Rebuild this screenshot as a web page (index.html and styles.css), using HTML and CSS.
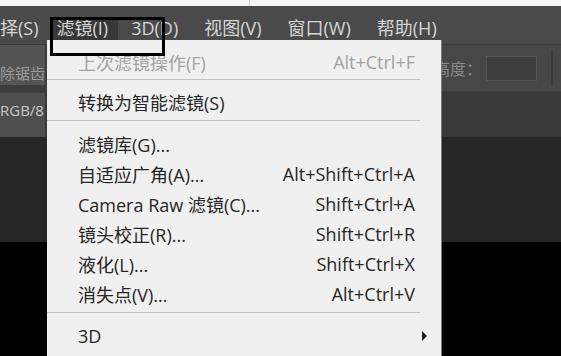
FILE: index.html
```html
<!DOCTYPE html>
<html>
    <head>
        <link rel="stylesheet" href="styles.css">
    </head>
    <body>
        <div class="app">
            <div class="topStrip"><div class="topLeft"></div></div>
            <div class="menuBar">
                <span class="mbItem first">择(S)</span>
                <span class="mbItem active">滤镜(I)</span>
                <span class="mbItem">3D(D)</span>
                <span class="mbItem">视图(V)</span>
                <span class="mbItem">窗口(W)</span>
                <span class="mbItem">帮助(H)</span>
            </div>
            <div class="optionsBar">
                <div class="optLeft">除锯齿</div>
                <div class="optRight">
                    <span class="optLabel">高度：</span>
                    <span class="optInput"></span>
                    <span class="optSep"></span>
                </div>
            </div>
            <div class="tabBar">
                <div class="tab">RGB/8</div>
            </div>
            <div class="frame"></div>
            <div class="canvas"></div>

            <!-- 滤镜 下拉菜单 -->
            <div class="dropMenu">
                <div class="mItem disabled"><span>上次滤镜操作(F)</span><span class="key">Alt+Ctrl+F</span></div>
                <div class="mSep tight"></div>
                <div class="mItem"><span>转换为智能滤镜(S)</span></div>
                <div class="mSep"></div>
                <div class="mItem"><span>滤镜库(G)...</span></div>
                <div class="mItem"><span>自适应广角(A)...</span><span class="key">Alt+Shift+Ctrl+A</span></div>
                <div class="mItem"><span>Camera Raw 滤镜(C)...</span><span class="key">Shift+Ctrl+A</span></div>
                <div class="mItem"><span>镜头校正(R)...</span><span class="key">Shift+Ctrl+R</span></div>
                <div class="mItem"><span>液化(L)...</span><span class="key">Shift+Ctrl+X</span></div>
                <div class="mItem"><span>消失点(V)...</span><span class="key">Alt+Ctrl+V</span></div>
                <div class="mSep"></div>
                <div class="mItem"><span>3D</span><span class="arrow"></span></div>
            </div>

            <!-- 标注框 -->
            <div class="mark"></div>
        </div>
    </body>
</html>
```

FILE: styles.css
```css
*{
    padding: 0;
    margin: 0;
    box-sizing: border-box;
}
body{
    background: #000;
    font-family: "Open Sans", "Noto Sans CJK SC", sans-serif;
}
.app{
    width: 561px;
    height: 356px;
    position: relative;
    overflow: hidden;
    display: flex;
    flex-direction: column;
}
.topStrip{
    height: 6px;
    background: #f4f4f4;
    display: flex;
}
.topLeft{
    width: 250px;
    border-right: 1px solid #cfcfcf;
}
.menuBar{
    height: 38px;
    background: #4a4a4a;
    display: flex;
    align-items: flex-end;
    color: #d6d6d6;
    font-size: 18px;
    white-space: nowrap;
}
.mbItem{
    height: 27px;
    line-height: 22px;
    padding: 0 13px;
}
.mbItem.first{
    padding: 0;
    margin-right: 11px;
}
.mbItem.active{
    background: #383838;
    padding: 0 10px 0 7px;
}
.optionsBar{
    height: 49px;
    background: #3c3c3c;
    display: flex;
    align-items: stretch;
    padding-top: 1px;
}
.optLeft{
    width: 45px;
    margin-right: 2px;
    margin-bottom: 8px;
    padding-top: 16px;
    background: #545454;
    color: #9a9a9a;
    font-size: 15px;
    line-height: 24px;
    white-space: nowrap;
}
.optRight{
    flex: 1;
    background: #474747;
    display: flex;
    align-items: center;
    justify-content: flex-end;
    padding-right: 8px;
    margin-bottom: 2px;
}
.optLabel{
    color: #8a8a8a;
    font-size: 16px;
    margin-right: 4px;
    white-space: nowrap;
}
.optInput{
    width: 51px;
    height: 25px;
    background: #3e3e3e;
    border: 1px solid #565656;
    margin-right: 14px;
}
.optSep{
    width: 2px;
    height: 36px;
    background: #3a3a3a;
}
.tabBar{
    height: 44px;
    background: #383838;
    display: flex;
}
.tab{
    width: 45px;
    background: #4e4e4e;
    color: #c8c8c8;
    font-size: 15px;
    line-height: 34px;
    white-space: nowrap;
}
.frame{
    height: 105px;
    background: #262626;
}
.canvas{
    flex: 1;
    background: #000;
}
.dropMenu{
    position: absolute;
    left: 47px;
    top: 40px;
    width: 395px;
    height: 330px;
    background: #f0f0f0;
    border-right: 1px solid #7a7a7a;
    padding: 7px 26px 0 31px;
    color: #262626;
    font-size: 18px;
}
.mItem{
    height: 30px;
    display: flex;
    align-items: center;
    justify-content: space-between;
    white-space: nowrap;
}
.mItem.disabled{
    color: #a3a3a3;
}
.mSep{
    height: 1px;
    background: #c2c2c2;
    margin: 3px -5px 8px -31px;
}
.mSep.tight{
    margin: 2px -5px 7px -31px;
}
.arrow{
    width: 0;
    height: 0;
    border-left: 5px solid #222;
    border-top: 5px solid transparent;
    border-bottom: 5px solid transparent;
    margin-right: -12px;
}
.mark{
    position: absolute;
    left: 50px;
    top: 17px;
    width: 115px;
    height: 39px;
    border: 3px solid #000;
}
```
